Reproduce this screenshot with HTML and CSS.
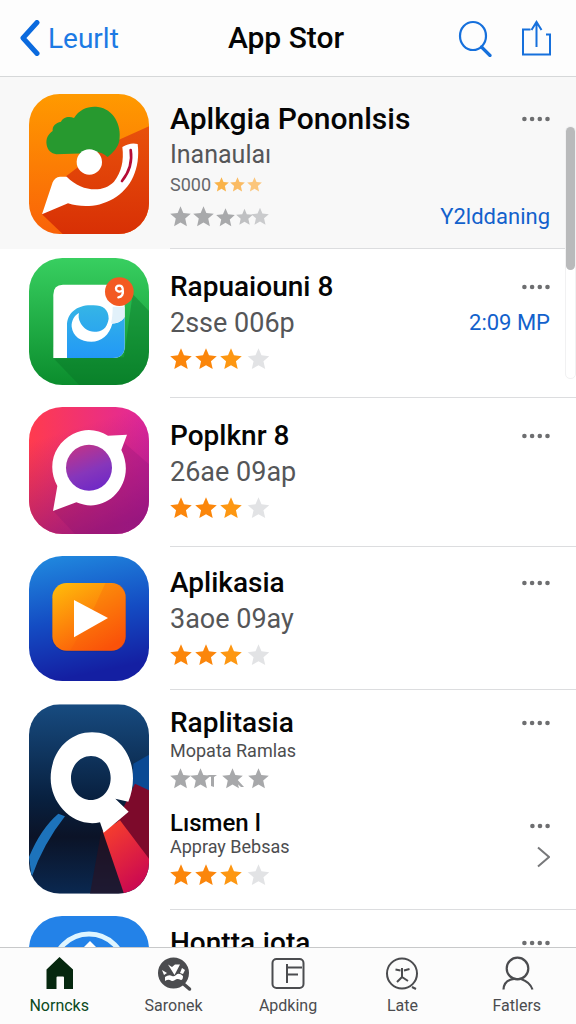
FILE: index.html
```html
<!DOCTYPE html>
<html lang="id">
<head>
<meta charset="utf-8">
<meta name="viewport" content="width=device-width, initial-scale=1">
<title>App Stor</title>
<link rel="stylesheet" href="styles.css">
</head>
<body>
<svg class="defs" aria-hidden="true">
  <defs>
    <symbol id="star" viewBox="0 0 20 20"><path d="M10 0.3 12.7 6.7 19.8 7.4 14.5 12 16.1 19.2 10 15.6 3.9 19.2 5.5 12 .2 7.4 7.3 6.7z"/></symbol>
    <symbol id="dots4" viewBox="0 0 28 6"><circle cx="2.4" cy="3" r="2.3"/><circle cx="10.1" cy="3" r="2.3"/><circle cx="17.8" cy="3" r="2.3"/><circle cx="25.5" cy="3" r="2.3"/></symbol>
    <symbol id="rating3" viewBox="0 0 100 22">
      <use href="#star" x="0" y="0" width="22" height="22" fill="#fb860b"/>
      <use href="#star" x="25" y="0" width="22" height="22" fill="#fb860b"/>
      <use href="#star" x="50" y="0" width="22" height="22" fill="#fd9712"/>
      <use href="#star" x="77" y="0" width="23" height="22" fill="#e2e3e5"/>
    </symbol>
    <linearGradient id="orange" x1="0" y1="0" x2="0" y2="1"><stop offset="0" stop-color="#ff9a00"/><stop offset="1" stop-color="#f96208"/></linearGradient>
    <linearGradient id="red" x1="0" y1="0" x2="0" y2="1"><stop offset="0" stop-color="#e8510b"/><stop offset="1" stop-color="#d83005"/></linearGradient>
    <linearGradient id="green" x1="0" y1="0" x2="0" y2="1"><stop offset="0" stop-color="#38cf60"/><stop offset="1" stop-color="#0b8d2d"/></linearGradient>
    <linearGradient id="sky" x1="0" y1="0" x2="0" y2="1"><stop offset="0" stop-color="#35b5e6"/><stop offset="1" stop-color="#2298f6"/></linearGradient>
    <linearGradient id="pink" x1="0" y1="0" x2="1" y2="0"><stop offset="0" stop-color="#ff3b4e"/><stop offset="1" stop-color="#e0289d"/></linearGradient>
    <linearGradient id="shade" x1="0.2" y1="0" x2="0.5" y2="1"><stop offset="0.2" stop-color="#8a107c" stop-opacity="0"/><stop offset="1" stop-color="#85117c" stop-opacity="0.7"/></linearGradient>
    <linearGradient id="violet" x1="0.2" y1="0" x2="0.6" y2="1"><stop offset="0" stop-color="#c23387"/><stop offset="0.6" stop-color="#8636bb"/><stop offset="1" stop-color="#7029c6"/></linearGradient>
    <linearGradient id="blue" x1="0" y1="0" x2="0.2" y2="1"><stop offset="0" stop-color="#218ce0"/><stop offset="0.55" stop-color="#144cc3"/><stop offset="1" stop-color="#141fa2"/></linearGradient>
    <linearGradient id="amber" x1="0.1" y1="0" x2="0.7" y2="1"><stop offset="0" stop-color="#ffba0b"/><stop offset="1" stop-color="#fb5109"/></linearGradient>
    <linearGradient id="navy" x1="0" y1="0" x2="0" y2="1"><stop offset="0" stop-color="#174b80"/><stop offset="0.5" stop-color="#08203f"/><stop offset="0.7" stop-color="#0b1327"/><stop offset="1" stop-color="#0a2850"/></linearGradient>
    <linearGradient id="crimson" x1="0" y1="0" x2="0.5" y2="1"><stop offset="0" stop-color="#fb4429"/><stop offset="1" stop-color="#cc0a50"/></linearGradient>
    <clipPath id="c1"><rect x="27" y="25" width="360" height="420" rx="92"/></clipPath>
    <clipPath id="c2"><rect x="27" y="22" width="360" height="381" rx="100"/></clipPath>
    <clipPath id="c3"><rect x="27" y="18" width="360" height="381" rx="100"/></clipPath>
    <clipPath id="c5"><rect x="27" y="27" width="360" height="568" rx="92"/></clipPath>
  </defs>
</svg>

<header class="bar">
  <a class="back" href="#">
    <svg width="20" height="36" viewBox="0 0 20 36" aria-hidden="true"><path d="M17 2.500 3 18 17 33.500" fill="none" stroke="#0b6ade" stroke-width="5" stroke-linecap="round" stroke-linejoin="round"/></svg>
    <span>Leurlt</span>
  </a>
  <h1>App Stor</h1>
  <div class="actions">
    <button type="button" aria-label="Search"><svg width="36" height="38" viewBox="0 0 36 38"><g fill="none" stroke="#1670dc" stroke-width="2.200"><ellipse cx="15" cy="17" rx="13" ry="14"/><path d="M23.500 28 32 36.500" stroke-width="3.200" stroke-linecap="round"/></g></svg></button>
    <button type="button" aria-label="Share"><svg width="32" height="38" viewBox="0 0 32 38"><path d="M10.500 10.500H3v25h27V15.500h-4M16.500 28V3M11.500 11 16.500 3l5 8" fill="none" stroke="#1670dc" stroke-width="2"/></svg></button>
  </div>
</header>

<main class="list">
  <article class="row featured">
    <svg class="icon" width="120" height="140" viewBox="27 25 360 420" aria-hidden="true">
      <g clip-path="url(#c1)">
        <path fill="url(#orange)" d="M27 25h360v420H27z"/>
        <path fill="url(#red)" d="M387 122 262 178 140 270 66 386 128 445H387z"/>
        <path fill="#27992f" d="M80 178c-3-20 4-32 18-42-2-14 9-25 25-28 5-13 24-18 39-11 16-26 44-37 72-33 45 6 72 53 64 101-4 20-18 35-35 49-15-14-36-20-62-11l-92 3c-16-3-26-13-29-28z"/>
        <circle cx="208" cy="229" r="38" fill="#fff"/>
        <path fill="#fff" d="M307 184q24-15 46-9c9 73-20 134-73 164-45 26-95 27-136 14L66 386 98 290q6-15 22-17h20c45 45 108 50 142 15q33-42 25-104z"/>
        <path d="M332 193q8 51-26 93" fill="none" stroke="#b50c36" stroke-width="8" stroke-linecap="round"/>
      </g>
    </svg>
    <div class="body">
      <div class="line"><h2>Aplkgia Pononlsis</h2><button class="more" type="button" aria-label="More"><svg width="28" height="6"><use href="#dots4"/></svg></button></div>
      <p class="sub">Inanaulaı</p>
      <p class="count">S000<svg width="50" height="16" viewBox="0 0 50 16" aria-hidden="true"><use href="#star" x="1" width="15" height="15" fill="#f9b34a"/><use href="#star" x="17" width="15" height="15" fill="#fabb63"/><use href="#star" x="34" width="15" height="15" fill="#fbc67c"/></svg></p>
      <div class="line stars">
        <svg width="100" height="22" viewBox="0 0 100 22" role="img" aria-label="Rating"><g fill="#a8a9ab"><use href="#star" width="21" height="21"/><use href="#star" x="23" width="21" height="21"/><use href="#star" x="46" y="2" width="19" height="19"/></g><use href="#star" x="66" y="2" width="17" height="18" fill="#bfc0c2"/><use href="#star" x="81" y="1" width="18" height="19" fill="#cacbcd"/></svg>
        <a class="get" href="#">Y2lddaning</a>
      </div>
    </div>
  </article>

  <article class="row">
    <svg class="icon" width="120" height="127" viewBox="27 22 360 381" aria-hidden="true">
      <g clip-path="url(#c2)">
        <path fill="url(#green)" d="M27 22h360v381H27z"/>
        <path fill="#077025" opacity=".4" d="M338 130 400 195v208H178L102 324l210-4z"/>
        <path fill="#fff" d="M129 102h150q35 0 35 35v150q0 35-35 35H100V132q0-30 29-30z"/>
        <path fill="url(#sky)" d="M141 322V225c0-38 30-61 70-61 35-3 55 10 55 40-3 19-12 37-36 39-23 3-39-9-48-25-7-13-7-22-5-31-14 7-23 24-22 41 4 29 27 45 59 45 30 0 54-20 63-54 18-1 31-9 37-20v88q0 35-35 35z"/>
        <path fill="#e2f1fa" d="M273 218q5-20 5-50h36v31q-15 20-41 19z"/>
        <circle cx="298" cy="123" r="43" fill="#f35a22"/>
        <path d="M307 120c-8 6-19 1-19-6 0-11 18-13 20 0 3 18-3 25-13 26" fill="none" stroke="#fff" stroke-width="7" stroke-linecap="round"/>
      </g>
    </svg>
    <div class="body">
      <div class="line"><h2>Rapuaiouni 8</h2><button class="more" type="button" aria-label="More"><svg width="28" height="6"><use href="#dots4"/></svg></button></div>
      <div class="line"><p class="sub">2sse 006p</p><a class="get" href="#">2:09 MP</a></div>
      <div class="stars"><svg width="100" height="22" role="img" aria-label="3 of 4 stars"><use href="#rating3"/></svg></div>
    </div>
  </article>

  <article class="row">
    <svg class="icon" width="120" height="127" viewBox="27 18 360 381" aria-hidden="true">
      <g clip-path="url(#c3)">
        <path fill="url(#pink)" d="M27 18h360v381H27z"/>
        <path fill="url(#shade)" d="M27 18h360v381H27z"/>
        <path fill="#7d0d70" opacity=".2" d="M310 123 387 190v209H165L99 329z"/>
        <path fill="#fff" d="M99 330 112 255C78 193 104 127 159 99c38-19 73-14 105 5l57-3-17 46c24 48 16 102-23 139-33 29-73 35-112 18z"/>
        <circle cx="207" cy="200" r="69" fill="url(#violet)"/>
      </g>
    </svg>
    <div class="body">
      <div class="line"><h2>Poplknr 8</h2><button class="more" type="button" aria-label="More"><svg width="28" height="6"><use href="#dots4"/></svg></button></div>
      <p class="sub">26ae 09ap</p>
      <div class="stars"><svg width="100" height="22" role="img" aria-label="3 of 4 stars"><use href="#rating3"/></svg></div>
    </div>
  </article>

  <article class="row compact">
    <svg class="icon" width="120" height="125" viewBox="27 17 360 375" aria-hidden="true">
      <rect x="27" y="17" width="360" height="375" rx="100" fill="url(#blue)"/>
      <rect x="96" y="101" width="222" height="204" rx="46" fill="#102b91" opacity=".5"/>
      <rect x="97" y="98" width="220" height="203" rx="43" fill="url(#amber)"/>
      <path fill="#f9570b" opacity=".25" d="M256 99h18q43 0 43 43v116q0 43-43 43H151l72-130z"/>
      <path fill="#fff" d="M162 149 264 203 162 261z"/>
    </svg>
    <div class="body">
      <div class="line"><h2>Aplikasia</h2><button class="more" type="button" aria-label="More"><svg width="28" height="6"><use href="#dots4"/></svg></button></div>
      <p class="sub">3aoe 09ay</p>
      <div class="stars"><svg width="100" height="22" role="img" aria-label="3 of 4 stars"><use href="#rating3"/></svg></div>
    </div>
  </article>

  <article class="row double">
    <svg class="icon" width="120" height="190" viewBox="27 27 360 568" aria-hidden="true">
      <g clip-path="url(#c5)">
        <path fill="url(#navy)" d="M27 27h360v568H27z"/>
        <path fill="#0b4a94" d="M340 205 387 178v120l-50-25z"/>
        <path fill="#1d73bb" d="M27 485Q62 400 115 355l20 8Q70 445 35 545z"/>
        <path fill="#2b1020" opacity=".6" d="M245 400 315 595H210z"/>
        <path fill="#7d0a2b" d="M345 265 387 285v215L290 378z"/>
        <path fill="url(#crimson)" d="M248 408 300 375 387 490v105h-75z"/>
        <path fill="#fff" fill-rule="evenodd" d="M216 111C290 111 339 173 339 249q0 37-14 70l-39-9 40 39-75 63-11-31C163 398 92 328 92 249 92 173 143 111 216 111zm-3 71c-34 0-60 30-60 66s26 66 60 66 59-30 59-66-25-66-59-66z"/>
      </g>
    </svg>
    <div class="body">
      <div class="line"><h2>Raplitasia</h2><button class="more" type="button" aria-label="More"><svg width="28" height="6"><use href="#dots4"/></svg></button></div>
      <p class="small">Mopata Ramlas</p>
      <div class="stars"><svg width="100" height="22" viewBox="0 0 100 22" role="img" aria-label="Rating"><g fill="#a7a8aa"><use href="#star" width="21" height="21"/><use href="#star" x="20" width="21" height="21"/><path d="M37 7h10l-3 2v10l-3-1V9z"/><use href="#star" x="52" width="21" height="21"/><path d="M65 9 74 19h-3l-8-7z"/><use href="#star" x="78" width="21" height="21"/></g></svg></div>
      <div class="nested">
        <div>
          <h3>Lısmen l</h3>
          <p class="small">Appray Bebsas</p>
          <div class="stars"><svg width="100" height="22" role="img" aria-label="3 of 4 stars"><use href="#rating3"/></svg></div>
        </div>
        <div class="side">
          <button class="more" type="button" aria-label="More"><svg width="20" height="6"><g><circle cx="2.400" cy="3" r="2.300"/><circle cx="10" cy="3" r="2.300"/><circle cx="17.600" cy="3" r="2.300"/></g></svg></button>
          <a href="#" aria-label="Open"><svg width="14" height="22" viewBox="0 0 14 22"><path d="M2 1.500 13 11 2 20.500" fill="none" stroke="#77787a" stroke-width="2"/></svg></a>
        </div>
      </div>
    </div>
  </article>

  <article class="row double last">
    <svg class="icon" width="120" height="127" viewBox="0 0 120 127" aria-hidden="true">
      <rect width="120" height="127" rx="33" fill="#2382e8"/>
      <circle cx="60" cy="54" r="36" fill="none" stroke="#dff5ff" stroke-width="5"/>
      <path fill="#fff" d="M55 31 61 25 67 31 85 70H37z"/>
    </svg>
    <div class="body">
      <div class="line"><h2>Hontta.iota</h2><button class="more" type="button" aria-label="More"><svg width="28" height="6"><use href="#dots4"/></svg></button></div>
    </div>
  </article>
  <div class="track"><div class="thumb"></div></div>
</main>

<nav class="tabs">
  <a class="active" href="#"><svg width="36" height="36" viewBox="0 0 36 36" aria-hidden="true"><path fill="#06280f" d="M18.500 1 32 13.500V33H23V21.500Q23 20.500 22 20.500H16.500Q15.500 20.500 15.500 21.500V33H5.500V13.500z"/></svg><span>Norncks</span></a>
  <a href="#"><svg width="36" height="36" viewBox="0 0 36 36" aria-hidden="true"><circle cx="17.500" cy="17" r="15.500" fill="#4b4c4f"/><path d="M27 27.500 33.500 33" stroke="#4b4c4f" stroke-width="3.500" stroke-linecap="round"/><path fill="#fff" d="M12 8.500 16 11l3-2.500h5L18.500 19zM9 21q4-3 7-1 2 1 4-1 3-3 7 1 0 4-2 4-4-2-6 0-3 2-5 0-2-1-5 1zM6 14l5 3-3 2zM26 12l3 2-2 4-3-1z"/></svg><span>Saronek</span></a>
  <a href="#"><svg width="36" height="36" viewBox="0 0 36 36" aria-hidden="true"><g fill="none" stroke="#4b4c4f" stroke-width="2"><rect x="2.500" y="3" width="31" height="29" rx="4"/><path d="M17 8v19M17 11.500h15M17 18.500h11"/></g></svg><span>Apdking</span></a>
  <a href="#"><svg width="36" height="36" viewBox="0 0 36 36" aria-hidden="true"><g fill="none" stroke="#4b4c4f" stroke-width="2"><circle cx="18" cy="17.500" r="15"/><path d="M18 12v9M13 26l5-5 6 4M11.500 13.500l5 1M20 14.500l5.500-1.500M28 31l4 2"/></g></svg><span>Late</span></a>
  <a href="#"><svg width="36" height="36" viewBox="0 0 36 36" aria-hidden="true"><g fill="none" stroke="#4b4c4f" stroke-width="2.200"><circle cx="18.500" cy="12.500" r="10.800"/><path d="M4.500 33.500Q5 24 15 23h7q9 3 11.500 10.500"/></g></svg><span>Fatlers</span></a>
</nav>
</body>
</html>
```

FILE: styles.css
```css
* { box-sizing: border-box; }

body {
  margin: 0;
  height: 100vh;
  display: flex;
  flex-direction: column;
  overflow: hidden;
  background: #fff;
  color: #050505;
  font-family: Roboto, "Liberation Sans", sans-serif;
}

h1, h2, h3, p { margin: 0; }
a { color: inherit; text-decoration: none; }
button { border: 0; padding: 0; background: none; display: flex; }
svg { display: block; flex: none; }
.defs { position: absolute; width: 0; height: 0; }

.bar {
  flex: none;
  display: grid;
  grid-template-columns: 1fr auto 1fr;
  align-items: center;
  height: 77px;
  padding: 0 24px 0 20px;
  border-bottom: 1px solid #d6d8d9;
  background: #fdfdfd;
}
.back { display: flex; align-items: center; gap: 8px; color: #1c7ae4; font-size: 28px; }
.bar h1 { font-size: 30px; font-weight: 500; line-height: 36px; }
.actions { display: flex; justify-content: flex-end; gap: 26px; }

.list { position: relative; flex: 1; min-height: 0; overflow: hidden; }
.row { display: flex; gap: 21px; padding-left: 29px; }
.icon { margin-top: 9px; }
.body { flex: 1; min-width: 0; padding: 20px 26px 20px 0; border-bottom: 1px solid #dcdddf; }
.line { display: flex; align-items: center; justify-content: space-between; }
.more { fill: #6d6e70; }

h2 { font-size: 28px; font-weight: 500; line-height: 36px; white-space: nowrap; }
h3 { font-size: 24px; font-weight: 500; line-height: 28px; }
.sub { color: #555658; font-size: 27px; line-height: 36px; }
.small { color: #4c4d4f; font-size: 18px; line-height: 20px; }
.count { display: flex; align-items: center; gap: 2px; color: #66676a; font-size: 18px; line-height: 24px; }
.stars { display: flex; align-items: center; height: 36px; }
.get { color: #1261cc; font-size: 22px; line-height: 36px; }

.featured { background: #f8f8f8; }
.featured .icon { margin-top: 17px; }
.featured .body { padding: 24px 26px 15px 0; }
.featured h2 { font-size: 30px; }
.featured .sub { font-size: 25px; }
.featured .stars { height: 38px; padding-top: 2px; }
.featured .body { padding-bottom: 13px; }
.compact .body { padding: 18px 26px 16px 0; }
.double .icon { margin-top: 14px; }
.double .body { padding: 15px 26px 16px 0; }
.last .icon { margin-top: 6px; }

.nested { display: flex; justify-content: space-between; margin-top: 12px; }
.side { display: flex; flex-direction: column; align-items: flex-end; gap: 17px; padding-top: 14px; }

.track {
  position: absolute;
  top: 49px;
  right: 0;
  width: 11px;
  height: 253px;
  border: 1px solid #f1f1f2;
  border-radius: 5px;
}
.thumb { width: 9px; height: 143px; border-radius: 5px; background: #b9babb; }

.tabs {
  flex: none;
  display: flex;
  height: 77px;
  padding: 8px 2px 0;
  border-top: 1px solid #c8c9ca;
  background: #fcfcfc;
  color: #4b4c4f;
}
.tabs a { flex: 1; display: flex; flex-direction: column; align-items: center; gap: 4px; font-size: 16px; line-height: 20px; }
.tabs .active { color: #0b4a1d; }
```
